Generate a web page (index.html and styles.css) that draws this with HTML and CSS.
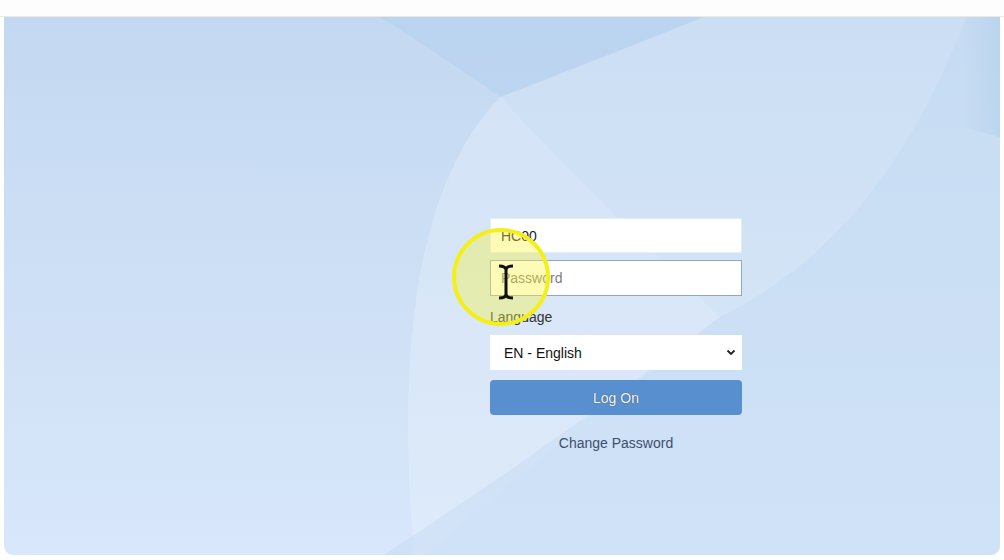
FILE: index.html
```html
<!DOCTYPE html>
<html>
<head>
<meta charset="utf-8">
<link rel="stylesheet" href="styles.css">
</head>
<body>
<div class="topbar"></div>
<main class="panel">
  <svg class="bg" viewBox="0 0 996 538" preserveAspectRatio="none" aria-hidden="true">
    <defs>
      <linearGradient id="edge" x1="0" y1="0" x2="1" y2="0">
        <stop offset="0" stop-color="#b4d0ec" stop-opacity="0"/>
        <stop offset="1" stop-color="#b4d0ec" stop-opacity="0.6"/>
      </linearGradient>
    </defs>
    <path d="M376 0 L700 0 Q600 40 496 80 Q440 40 376 0 Z" fill="#b4d0ee" opacity="0.55"/>
    <path d="M496 80 Q380 200 410 538 L996 538 L996 0 L700 0 Q600 40 496 80 Z" fill="#e2eefc" opacity="0.25"/>
    <path d="M496 80 Q380 200 410 538 L420 538 Q560 420 716 300 Q600 190 496 80 Z" fill="#e6f0fc" opacity="0.25"/>
    <path d="M962 0 Q880 220 716 300 Q560 420 380 538 L996 538 L996 0 Z" fill="#bcd6f0" opacity="0.35"/>
    <path d="M962 0 Q955 50 960 110 L996 120 L996 0 Z" fill="url(#edge)"/>
  </svg>
  <form class="login">
    <input class="field" type="text" value="HC00">
    <input class="field focused" type="password" placeholder="Password">
    <label class="lang-label">Language</label>
    <div class="select">
      <span>EN - English</span>
      <svg class="chev" width="10" height="7" viewBox="0 0 10 7"><path d="M1.5 1.5 L5 5 L8.5 1.5" fill="none" stroke="#222" stroke-width="1.8"/></svg>
    </div>
    <button class="btn" type="button">Log On</button>
    <a class="change" href="#">Change Password</a>
  </form>
  <div class="cursor-ring"></div>
  <svg class="ibeam" width="18" height="36" viewBox="0 0 18 36" aria-hidden="true">
    <path d="M2 2 Q9 2 9 6 L9 30 Q9 34 2 34 M16 2 Q9 2 9 6 M9 30 Q9 34 16 34" fill="none" stroke="#111" stroke-width="3"/>
  </svg>
</main>
</body>
</html>
```
FILE: styles.css
```css
html, body {
  margin: 0;
  padding: 0;
  background: #ffffff;
  font-family: "Liberation Sans", Arial, sans-serif;
}
.topbar {
  height: 17px;
  background: #fdfdfd;
  border-bottom: 1px solid #ece8e4;
  box-sizing: border-box;
}
.panel {
  position: relative;
  margin: 0 4px;
  height: 538px;
  border-radius: 0 0 9px 9px;
  overflow: hidden;
  background: linear-gradient(180deg, #c3d9f1 0%, #cddff5 45%, #d8e7fb 100%);
  box-sizing: border-box;
  padding-top: 201px;
  padding-left: 486px;
}
.bg {
  position: absolute;
  left: 0;
  top: 0;
  width: 100%;
  height: 100%;
}
.login {
  position: relative;
  width: 252px;
  display: flex;
  flex-direction: column;
}
.field {
  height: 35px;
  box-sizing: border-box;
  border: 1px solid #e4ecf6;
  background: #fff;
  padding: 0 10px;
  font-family: "Liberation Sans", Arial, sans-serif;
  font-size: 14px;
  color: #222;
  outline: none;
  margin: 0 0 7px 0;
}
.field.focused {
  height: 36px;
  border: 1px solid #8ea8c3;
}
.field::placeholder { color: #7d7d7d; }
.lang-label {
  font-size: 14px;
  color: #333;
  margin: 6px 0 10px 0;
  line-height: 16px;
}
.select {
  height: 35px;
  background: #fff;
  display: flex;
  align-items: center;
  justify-content: space-between;
  padding: 0 6px 0 14px;
  font-size: 14px;
  color: #111;
  box-sizing: border-box;
}
.btn {
  margin-top: 10px;
  height: 35px;
  border: none;
  border-radius: 4px;
  background: #5890cf;
  color: #fff;
  font-family: "Liberation Sans", Arial, sans-serif;
  font-size: 14px;
  text-shadow: 0 0 1px #223;
}
.change {
  margin-top: 20px;
  text-align: center;
  font-size: 14px;
  color: #3e4f6c;
  text-decoration: none;
}
.cursor-ring {
  position: absolute;
  left: 448px;
  top: 211px;
  width: 90px;
  height: 90px;
  border-radius: 50%;
  border: 4px solid #f4ef1c;
  background: rgba(250, 245, 60, 0.38);
}
.ibeam {
  position: absolute;
  left: 493px;
  top: 247px;
}
```
